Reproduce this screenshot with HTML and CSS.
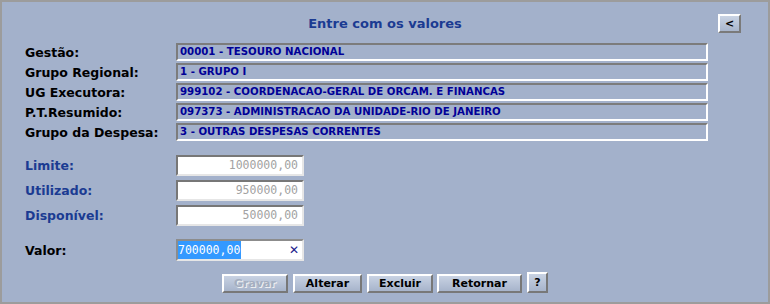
FILE: index.html
```html
<!DOCTYPE html>
<html lang="pt-BR">
<head>
    <meta charset="UTF-8">
    <title>Entre com os valores</title>
    <link rel="stylesheet" href="styles.css">
</head>
<body>
    <div class="panel">
        <div class="header">
            <h1 class="title">Entre com os valores</h1>
            <button class="back-btn">&lt;</button>
        </div>

        <div class="info-grid">
            <span class="label">Gestão:</span>
            <div class="field">00001 - TESOURO NACIONAL</div>
            <span class="label">Grupo Regional:</span>
            <div class="field">1 - GRUPO I</div>
            <span class="label">UG Executora:</span>
            <div class="field">999102 - COORDENACAO-GERAL DE ORCAM. E FINANCAS</div>
            <span class="label">P.T.Resumido:</span>
            <div class="field">097373 - ADMINISTRACAO DA UNIDADE-RIO DE JANEIRO</div>
            <span class="label">Grupo da Despesa:</span>
            <div class="field">3 - OUTRAS DESPESAS CORRENTES</div>
        </div>

        <div class="value-grid">
            <span class="label label-blue">Limite:</span>
            <div class="num-box">1000000,00</div>
            <span class="label label-blue">Utilizado:</span>
            <div class="num-box">950000,00</div>
            <span class="label label-blue">Disponível:</span>
            <div class="num-box">50000,00</div>
        </div>

        <div class="value-grid valor-row">
            <span class="label">Valor:</span>
            <div class="num-box edit-box">
                <span class="selected">700000,00</span>
                <span class="clear">&#x2715;</span>
            </div>
        </div>

        <div class="actions">
            <button class="btn btn-gravar" disabled>Gravar</button>
            <button class="btn btn-alterar">Alterar</button>
            <button class="btn btn-excluir">Excluir</button>
            <button class="btn btn-retornar">Retornar</button>
            <button class="btn help-btn">?</button>
        </div>
    </div>
</body>
</html>
```

FILE: styles.css
```css
* {
    margin: 0;
    padding: 0;
    box-sizing: border-box;
    font-family: 'DejaVu Sans', Verdana, sans-serif;
}

body {
    background-color: #9c9c9c;
    padding: 2px;
}

.panel {
    background-color: #a3b1cb;
    width: 766px;
    height: 300px;
    padding: 11px 0 0 23px;
}

.header {
    display: flex;
    align-items: center;
    height: 21px;
}

.title {
    flex: 1;
    text-align: center;
    font-size: 13px;
    color: #1b3b92;
    padding-left: 27px;
}

.back-btn {
    width: 23px;
    height: 19px;
    margin-right: 27px;
    margin-top: -1px;
    font-size: 11px;
    font-weight: bold;
    color: #000;
    background: linear-gradient(#c9d3e3, #a9b6cd);
    border: 2px solid;
    border-color: #fff #7a7a7a #7a7a7a #fff;
}

.info-grid {
    display: grid;
    grid-template-columns: 151px 532px;
    row-gap: 2px;
    margin-top: 9px;
}

.label {
    font-size: 12.5px;
    font-weight: bold;
    color: #000;
    display: flex;
    align-items: center;
}

.label-blue {
    color: #1b3b92;
}

.field {
    height: 18px;
    border: 2px solid;
    border-color: #7c7c7c #fff #fff #7c7c7c;
    padding: 0 2px;
    font-size: 10.2px;
    font-weight: bold;
    color: #000097;
    line-height: 14px;
    white-space: nowrap;
}

.value-grid {
    display: grid;
    grid-template-columns: 151px 128px;
    row-gap: 4px;
    margin-top: 14px;
}

.num-box {
    height: 21px;
    background: #fff;
    border: 2px solid;
    border-color: #777 #e6e6e6 #e6e6e6 #777;
    font-family: 'DejaVu Sans Mono', monospace;
    font-size: 11.5px;
    color: #a2a2a2;
    text-align: right;
    padding-right: 4px;
    line-height: 17px;
}

.valor-row {
    margin-top: 13px;
}

.edit-box {
    height: 22px;
    display: flex;
    justify-content: space-between;
    align-items: center;
    padding: 0 3px 0 0;
    border-color: #8c8c8c #e6e6e6 #e6e6e6 #8c8c8c;
}

.selected {
    background: #3399ff;
    color: #fff;
    line-height: 18px;
    padding-right: 1px;
    font-family: 'DejaVu Sans Mono', monospace;
}

.clear {
    color: #1a1a8a;
    font-family: 'DejaVu Sans', sans-serif;
    font-size: 12px;
    font-weight: bold;
}

.actions {
    display: flex;
    align-items: flex-end;
    gap: 5px;
    margin-top: 11px;
    padding-left: 197px;
}

.btn {
    height: 19px;
    font-size: 11px;
    font-weight: bold;
    color: #000;
    background: linear-gradient(#c8d2e3, #a7b4cb);
    border: 2px solid;
    border-color: #fff #787878 #787878 #fff;
}

.btn-gravar { width: 66px; }
.btn-alterar { width: 69px; }
.btn-excluir { width: 66px; margin-right: -1px; }
.btn-retornar { width: 85px; }

.btn:disabled {
    color: #a4aec0;
    text-shadow: 1px 1px 0 #f0f0f0;
}

.help-btn {
    width: 21px;
    height: 21px;
    padding: 0;
}
```
